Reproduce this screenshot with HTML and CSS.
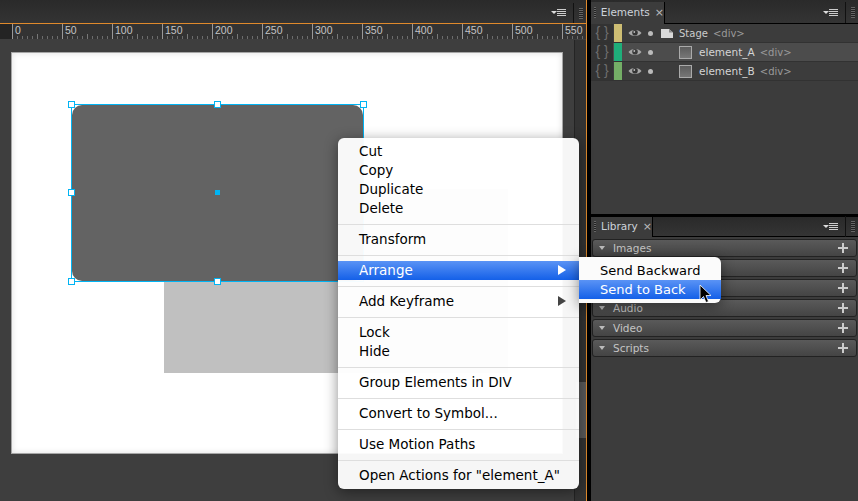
FILE: index.html
```html
<!doctype html>
<html lang="en">
<head>
  <meta charset="utf-8">
  <title>Arrange menu</title>
  <link rel="stylesheet" href="styles.css">
</head>
<body>

  <div id="app">

    <!-- stage panel -->
    <div class="stage-panel">
      <div class="tabbar">
        <svg class="menu-icon" width="15" height="8" viewBox="0 0 15 8"><path d="M0 2h6L3 5z" fill="#ddd"/><path d="M6 .5h9M6 2.500h9M6 4.500h9M6 6.500h9" stroke="#ccc"/></svg>
        <span class="tabbar-sep"></span>
        <span class="grip"></span>
      </div>
      <div class="ruler">
        <span class="ruler-start"></span>
        <span class="tick">0</span>
        <span class="tick">50</span>
        <span class="tick">100</span>
        <span class="tick">150</span>
        <span class="tick">200</span>
        <span class="tick">250</span>
        <span class="tick">300</span>
        <span class="tick">350</span>
        <span class="tick">400</span>
        <span class="tick">450</span>
        <span class="tick">500</span>
        <span class="tick">550</span>
      </div>
      <div class="work">
        <div class="canvas">
          <div class="stage">
            <div class="element-b"></div>
            <div class="element-a">
              <div class="element-a-fill"></div>
              <span class="handle h-tl"></span>
              <span class="handle h-tc"></span>
              <span class="handle h-tr"></span>
              <span class="handle h-ml"></span>
              <span class="center-dot"></span>
              <span class="handle h-bl"></span>
              <span class="handle h-bc"></span>
            </div>
          </div>
        </div>
        <div class="scrollbar"><div class="thumb"></div></div>
      </div>
    </div>

    <!-- right side panels -->
    <div class="side">
      <div class="panel elements-panel">
        <div class="tabbar side-tabbar">
          <div class="tab elements-tab"><span class="grip"></span><span class="tab-name">Elements</span><span class="tab-x">×</span></div>
          <svg class="menu-icon" width="15" height="8" viewBox="0 0 15 8"><path d="M0 2h6L3 5z" fill="#ddd"/><path d="M6 .5h9M6 2.500h9M6 4.500h9M6 6.500h9" stroke="#ccc"/></svg>
          <span class="tabbar-sep"></span>
          <span class="grip"></span>
        </div>

        <div class="row">
          <span class="braces">{ }</span>
          <span class="swatch yellow"></span>
          <svg class="eye" width="14" height="10" viewBox="0 0 14 10"><path d="M.5 5C3 1 11 1 13.500 5C11 9 3 9 .5 5z" fill="#a8a8a8"/><circle cx="7" cy="4.800" r="2.800" fill="#333"/><circle cx="6.300" cy="4" r=".9" fill="#bbb"/></svg>
          <span class="dot"></span>
          <svg class="page" width="12" height="9" viewBox="0 0 12 9"><path d="M0 0h8l4 3.500v5.500h-12z" fill="#d8d8d8"/><path d="M8 0v3.500h4z" fill="#8a8a8a"/></svg>
          <span class="name">Stage</span><span class="tag">&lt;div&gt;</span>
        </div>
        <div class="row selected">
          <span class="braces">{ }</span>
          <span class="swatch teal"></span>
          <svg class="eye" width="14" height="10" viewBox="0 0 14 10"><path d="M.5 5C3 1 11 1 13.500 5C11 9 3 9 .5 5z" fill="#a8a8a8"/><circle cx="7" cy="4.800" r="2.800" fill="#3a3a3a"/><circle cx="6.300" cy="4" r=".9" fill="#bbb"/></svg>
          <span class="dot"></span>
          <span class="box"></span>
          <span class="name element-name">element_A</span><span class="tag">&lt;div&gt;</span>
        </div>
        <div class="row">
          <span class="braces">{ }</span>
          <span class="swatch green"></span>
          <svg class="eye" width="14" height="10" viewBox="0 0 14 10"><path d="M.5 5C3 1 11 1 13.500 5C11 9 3 9 .5 5z" fill="#a8a8a8"/><circle cx="7" cy="4.800" r="2.800" fill="#333"/><circle cx="6.300" cy="4" r=".9" fill="#bbb"/></svg>
          <span class="dot"></span>
          <span class="box"></span>
          <span class="name element-name">element_B</span><span class="tag">&lt;div&gt;</span>
        </div>
      </div>

      <div class="panel library-panel">
        <div class="tabbar side-tabbar library-tabbar">
          <div class="tab library-tab"><span class="grip"></span><span class="tab-name">Library</span><span class="tab-x">×</span></div>
          <svg class="menu-icon" width="15" height="8" viewBox="0 0 15 8"><path d="M0 2h6L3 5z" fill="#ddd"/><path d="M6 .5h9M6 2.500h9M6 4.500h9M6 6.500h9" stroke="#ccc"/></svg>
          <span class="tabbar-sep"></span>
          <span class="grip"></span>
        </div>
        <div class="sections">
          <div class="section"><span class="down"></span><span class="section-name">Images</span><span class="plus"></span></div>
          <div class="section"><span class="down"></span><span class="section-name"></span><span class="plus"></span></div>
          <div class="section"><span class="down"></span><span class="section-name"></span><span class="plus"></span></div>
          <div class="section"><span class="down"></span><span class="section-name">Audio</span><span class="plus"></span></div>
          <div class="section"><span class="down"></span><span class="section-name">Video</span><span class="plus"></span></div>
          <div class="section"><span class="down"></span><span class="section-name">Scripts</span><span class="plus"></span></div>
        </div>
      </div>
    </div>

    <!-- context menu, over everything -->
    <div class="menu">
      <div class="item">Cut</div>
      <div class="item">Copy</div>
      <div class="item">Duplicate</div>
      <div class="item">Delete</div>
      <div class="sep"></div>
      <div class="item">Transform</div>
      <div class="sep"></div>
      <div class="item active">Arrange<span class="arrow"></span></div>
      <div class="sep"></div>
      <div class="item">Add Keyframe<span class="arrow"></span></div>
      <div class="sep"></div>
      <div class="item">Lock</div>
      <div class="item">Hide</div>
      <div class="sep"></div>
      <div class="item">Group Elements in DIV</div>
      <div class="sep"></div>
      <div class="item">Convert to Symbol...</div>
      <div class="sep"></div>
      <div class="item">Use Motion Paths</div>
      <div class="sep"></div>
      <div class="item">Open Actions for "element_A"</div>
    </div>

    <div class="submenu">
      <div class="item">Send Backward</div>
      <div class="item active">Send to Back</div>
    </div>

    <svg class="cursor" width="13" height="20" viewBox="0 0 13 20"><path d="M1 1v15l3.500-3.500 2.500 6 2.500-1-2.500-6h5z" fill="#000" stroke="#fff" stroke-width=".8"/></svg>
  </div>

</body>
</html>
```

FILE: styles.css
```css
* {
    box-sizing:border-box;
}
body {
    margin:0;
    background:#000;
    font-family:"DejaVu Sans", sans-serif;
    overflow:hidden;
}
#app {
    position:relative;
    display:flex;
    width:858px;
    height:501px;
    overflow:hidden;
    background:#000;
}

/* shared tab bar bits */
.tabbar {
    display:flex;
    align-items:center;
    justify-content:flex-end;
    height:24px;
    padding-top:2px;
    border-bottom:1px solid #000;
    background:linear-gradient(#2a2a2a, #343434);
}
.menu-icon {
    margin-right:7px;
}
.tabbar-sep {
    width:1px;
    height:21px;
    background:#111;
}
.grip {
    width:4px;
    height:11px;
    margin:0 3px 0 5px;
    background:repeating-linear-gradient(#666 0, #666 1px, #222 1px, #222 2px);
}

/* stage panel */
.stage-panel {
    display:flex;
    flex-direction:column;
    width:587px;
    border-right:1px solid #e08a2c;
}
.stage-panel .tabbar {
    height:24px;
    border-bottom:0;
    box-shadow:inset 0 -1px 0 #000;
}
.ruler {
    display:flex;
    height:16px;
    margin-top:-1px;
    border-top:1px solid #e08a2c;
    background:#333;
    overflow:hidden;
}
.ruler-start {
    flex:none;
    width:12px;
    background:#242424;
}
.tick {
    flex:none;
    width:50px;
    padding-left:2px;
    border-left:1px solid #999;
    color:#c4c4c4;
    font-family:"Liberation Sans", sans-serif;
    font-size:10.500px;
    line-height:13px;
    background:
        linear-gradient(#777, #777) 24px 100% / 1px 5px no-repeat,
        repeating-linear-gradient(90deg, transparent 0, transparent 4px, #6c6c6c 4px, #6c6c6c 5px) 0 100% / 100% 3px no-repeat;
}
.work {
    display:flex;
    flex:1;
    background:#3e3e3e;
}
.canvas {
    flex:1;
    padding:13px 0 0 11px;
}
.stage {
    position:relative;
    width:552px;
    height:402px;
    border:1px solid #a6a6a6;
    background:#fff;
    box-shadow:inset 0 0 6px rgba(0,0,0,.12);
}
.scrollbar {
    flex:none;
    width:12px;
    margin-top:1px;
    padding-top:342px;
    border-left:1px solid #242424;
    background:#333;
}
.thumb {
    height:56px;
    margin-left:1px;
    background:#5a5a5a;
}

/* the two elements on the stage */
.element-b {
    position:absolute;
    left:152px;
    top:136px;
    width:344px;
    height:184px;
    background:#c0c0c0;
}
.element-a {
    position:absolute;
    left:59px;
    top:51px;
    width:293px;
    height:178px;
    border:1px solid #00b4f4;
}
.element-a-fill {
    height:100%;
    border-radius:10px;
    background:#636363;
}
.handle {
    position:absolute;
    width:7px;
    height:7px;
    border:1px solid #00b4f4;
    background:#fff;
}
.h-tl { left:-4px; top:-4px; }
.h-tc { left:142px; top:-4px; }
.h-tr { left:288px; top:-4px; }
.h-ml { left:-4px; top:84px; }
.h-bl { left:-4px; top:173px; }
.h-bc { left:142px; top:173px; }
.center-dot {
    position:absolute;
    left:143px;
    top:85px;
    width:5px;
    height:5px;
    background:#00b4f4;
}

/* right side */
.side {
    display:flex;
    flex-direction:column;
    gap:3px;
    width:267px;
    margin-left:4px;
}
.panel {
    background:#3c3c3c;
}
.elements-panel {
    height:214px;
}
.library-panel {
    flex:1;
}
.library-tabbar {
    height:20px;
    padding-top:0;
}
.tab {
    display:flex;
    align-items:center;
    align-self:stretch;
    margin-right:auto;
    margin-bottom:-1px;
    padding-bottom:2px;
    background:#3c3c3c;
    border-right:1px solid #000;
}
.elements-tab {
    width:74px;
}
.library-tab {
    width:62px;
}
.tab .grip {
    margin:0 5px 0 3px;
}
.tab-name {
    color:#cdd3da;
    font-size:10.500px;
}
.tab-x {
    margin-left:5px;
    color:#bbb;
    font-size:11px;
}
.row {
    display:flex;
    align-items:center;
    height:19px;
    border-bottom:1px solid #323232;
    color:#ccc;
    font-size:10px;
}
.selected {
    background:#4c4c4c;
}
.braces {
    flex:none;
    width:22px;
    height:18px;
    margin-right:1px;
    background:#333;
    color:#6e6e6e;
    font-family:"Liberation Sans", sans-serif;
    font-size:14px;
    line-height:17px;
    text-align:center;
}
.swatch {
    flex:none;
    width:8px;
    height:18px;
}
.yellow { background:#cdbd73; }
.teal { background:#1fae7a; }
.green { background:#74ae66; }
.eye {
    flex:none;
    margin-left:6px;
}
.dot {
    flex:none;
    width:5px;
    height:5px;
    margin-left:6px;
    border-radius:50%;
    background:#bbb;
}
.page {
    flex:none;
    margin-left:8px;
    margin-right:6px;
}
.box {
    flex:none;
    width:13px;
    height:13px;
    margin-left:26px;
    margin-right:7px;
    border:1px solid #aaa;
    background:linear-gradient(#5c5c5c, #777);
}
.name {
    margin-right:5px;
}
.element-name {
    color:#d4d4d4;
    font-size:10.500px;
}
.tag {
    color:#9a9a9a;
}
.sections {
    display:flex;
    flex-direction:column;
    gap:2px;
    padding:2px 1px 0 1px;
}
.section {
    display:flex;
    align-items:center;
    height:18px;
    padding:0 8px 0 6px;
    border:1px solid #222;
    border-radius:3px;
    background:linear-gradient(#5a5a5a, #444);
}
.down {
    width:0;
    height:0;
    margin-right:8px;
    border-style:solid;
    border-width:4px 3.500px 0;
    border-color:#bbb transparent transparent;
}
.section-name {
    flex:1;
    color:#c4c4c4;
    font-size:10.500px;
}
.plus {
    width:10px;
    height:10px;
    background:
        linear-gradient(#ccc, #ccc) 50% 50% / 10px 2px no-repeat,
        linear-gradient(#ccc, #ccc) 50% 50% / 2px 10px no-repeat;
}

/* context menu */
.menu, .submenu {
    position:absolute;
    padding:4px 0;
    background:rgba(255,255,255,.955);
    box-shadow:0 3px 14px rgba(0,0,0,.45);
    color:#000;
    font-size:13.500px;
}
.menu {
    left:338px;
    top:138px;
    width:241px;
    border-radius:6px;
}
.submenu {
    left:579px;
    top:257px;
    width:142px;
    border-radius:0 6px 6px 0;
    background:#fbfbfb;
    font-size:13px;
}
.item {
    position:relative;
    height:19px;
    padding-left:21px;
    line-height:19px;
    white-space:nowrap;
}
.active {
    background:linear-gradient(#5a93f5, #1460e8);
    color:#fff;
}
.sep {
    height:12px;
    padding-top:6px;
}
.sep::before {
    content:"";
    display:block;
    height:1px;
    background:#dedede;
}
.arrow {
    position:absolute;
    right:13px;
    top:4px;
    width:0;
    height:0;
    border-style:solid;
    border-width:5px 0 5px 8px;
    border-color:transparent transparent transparent #444;
}
.active .arrow {
    border-left-color:#fff;
}
.cursor {
    position:absolute;
    left:699px;
    top:284px;
}
```
